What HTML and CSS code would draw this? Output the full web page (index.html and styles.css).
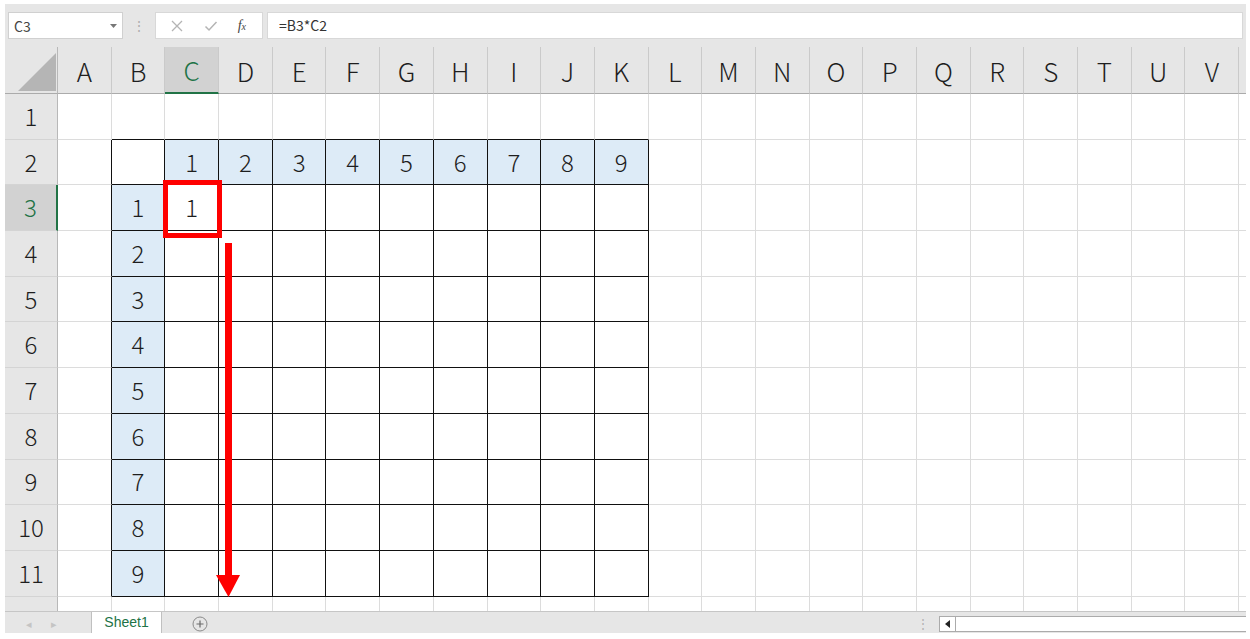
FILE: index.html
```html
<!DOCTYPE html>
<html>
<head>
  <title>Book1 - Excel</title>
  <link rel="stylesheet" href="styles.css">
</head>
<body>
  <div class="app">
    <div class="formula-bar">
      <div class="name-box">
        <span>C3</span>
        <svg class="drop" width="7" height="4" viewBox="0 0 7 4"><path d="M0 0h7L3.5 4z" fill="#777"/></svg>
      </div>
      <div class="grip">⋮</div>
      <div class="fx-buttons">
        <svg width="14" height="14" viewBox="0 0 14 14"><path d="M2 2l10 10M12 2L2 12" stroke="#b4b4b4" stroke-width="1.3"/></svg>
        <svg width="14" height="14" viewBox="0 0 14 14"><path d="M1.5 7.5l3.5 3.5 7.5-8" fill="none" stroke="#b4b4b4" stroke-width="1.5"/></svg>
        <span class="fx">f<small>x</small></span>
      </div>
      <div class="formula">=B3*C2</div>
    </div>

    <div class="sheet">
      <div class="grid" id="grid"></div>
      <div class="pick"></div>
      <svg class="arrow" width="24" height="354" viewBox="0 0 24 354">
        <rect x="9" y="0" width="7" height="334" fill="#ff0000"/>
        <polygon points="0,332 24,332 12.5,354" fill="#ff0000"/>
      </svg>
    </div>

    <div class="tab-bar">
      <div class="tab-nav">
        <span>◂</span><span>▸</span>
      </div>
      <div class="tab">Sheet1</div>
      <div class="add-sheet">
        <svg width="16" height="16" viewBox="0 0 16 16"><circle cx="8" cy="8" r="7" fill="none" stroke="#8a8a8a"/><path d="M8 4.5v7M4.5 8h7" stroke="#6a6a6a" stroke-width="1.2"/></svg>
      </div>
      <div class="tab-space"></div>
      <div class="grip small">⋮</div>
      <div class="hscroll">
        <div class="scroll-btn">
          <svg width="5" height="8" viewBox="0 0 5 8"><path d="M5 0v8L0 4z" fill="#222"/></svg>
        </div>
      </div>
    </div>
  </div>

  <script>
    const cols = 'ABCDEFGHIJKLMNOPQRSTUV'.split('');
    const grid = document.getElementById('grid');

    function cell(cls, text) {
      const d = document.createElement('div');
      d.className = cls;
      if (text !== '') d.textContent = text;
      grid.appendChild(d);
    }

    cell('corner', '');
    cols.forEach(c => cell('col-head' + (c === 'C' ? ' selected' : ''), c));
    cell('col-head', '');

    for (let r = 1; r <= 12; r++) {
      cell('row-head' + (r === 3 ? ' selected' : ''), r);
      cols.concat(['']).forEach((c, i) => {
        let cls = 'cell';
        let text = '';
        // black box around B2:K11
        if (r >= 2 && r <= 11 && i <= 10) cls += ' edge-r';
        if (r <= 11 && i >= 1 && i <= 10) cls += ' edge-b';
        if (r === 2 && i >= 2 && i <= 10) { cls += ' head'; text = i - 1; }
        if (i === 1 && r >= 3 && r <= 11) { cls += ' head'; text = r - 2; }
        if (r === 3 && i === 2) text = 1;
        cell(cls, text);
      });
    }
  </script>
</body>
</html>
```

FILE: styles.css
```css
body {
  margin: 0;
  background: #fff;
  font-family: "Noto Sans CJK JP", "Noto Sans", sans-serif;
}
.app {
  margin: 4px 4px 0 5px;
  width: 1241px;
  background: #e6e6e6;
}

/* formula bar */
.formula-bar {
  height: 43px;
  display: flex;
  align-items: flex-start;
  padding: 8px 3px 0 3px;
  box-sizing: border-box;
}
.name-box {
  width: 115px;
  height: 27px;
  box-sizing: border-box;
  background: #fff;
  border: 1px solid #d0d0d0;
  display: flex;
  align-items: center;
  justify-content: space-between;
  padding: 0 5px 0 5px;
  font-size: 14px;
  color: #444;
}
.drop {
  margin-top: 1px;
}
.grip {
  width: 32px;
  text-align: center;
  color: #b0b0b0;
  font-size: 14px;
  line-height: 27px;
}
.fx-buttons {
  width: 108px;
  height: 27px;
  box-sizing: border-box;
  background: #fff;
  border: 1px solid #d8d8d8;
  display: flex;
  align-items: center;
  justify-content: space-around;
  padding: 0 6px 0 4px;
}
.fx {
  font-family: "Liberation Serif", serif;
  font-style: italic;
  font-size: 14px;
  color: #444;
}
.fx small {
  font-size: 10px;
}
.formula {
  flex: 1;
  margin-left: 4px;
  height: 27px;
  box-sizing: border-box;
  background: #fff;
  border: 1px solid #d8d8d8;
  padding-left: 11px;
  font-size: 14px;
  line-height: 25px;
  color: #333;
}

/* sheet grid */
.sheet {
  position: relative;
  height: 564px;
  overflow: hidden;
  background: #fff;
}
.grid {
  display: grid;
  grid-template-columns: 53px repeat(23, 53.7px);
  grid-template-rows: 47px repeat(12, 45.7px);
}
.grid > div {
  box-sizing: border-box;
  display: flex;
  align-items: center;
  justify-content: center;
  padding-bottom: 2px;
  font-size: 24px;
  font-weight: 300;
  color: #1e1e1e;
}
.corner {
  position: relative;
  background: #e6e6e6;
  border-right: 1px solid #b8b8b8;
  border-bottom: 1px solid #ababab;
}
.corner::after {
  content: "";
  position: absolute;
  left: 13px;
  top: 6px;
  width: 38px;
  height: 38px;
  background: #b5b5b5;
  clip-path: polygon(100% 0, 100% 100%, 0 100%);
}
.grid > .col-head {
  background: #e6e6e6;
  border-right: 1px solid #cacaca;
  border-bottom: 1px solid #ababab;
  font-size: 26px;
  padding-bottom: 0;
}
.row-head {
  background: #e6e6e6;
  border-right: 1px solid #b8b8b8;
  border-bottom: 1px solid #d4d4d4;
}
.grid > .col-head.selected {
  background: #d2d2d2;
  color: #217346;
  border-bottom: 2px solid #217346;
}
.grid > .row-head.selected {
  background: #d2d2d2;
  color: #217346;
  border-right: 2px solid #217346;
}
.cell {
  border-right: 1px solid #dcdcdc;
  border-bottom: 1px solid #dcdcdc;
}
.cell.edge-r {
  border-right-color: #111;
}
.cell.edge-b {
  border-bottom-color: #111;
}
.cell.head {
  background: #ddebf7;
}

/* overlays */
.pick {
  position: absolute;
  left: 158px;
  top: 133px;
  width: 59px;
  height: 58px;
  box-sizing: border-box;
  border: 5px solid #ff0000;
}
.arrow {
  position: absolute;
  left: 211px;
  top: 196px;
}

/* sheet tabs */
.tab-bar {
  height: 21px;
  border-top: 1px solid #c6c6c6;
  display: flex;
  align-items: stretch;
}
.tab-nav {
  width: 87px;
  display: flex;
  gap: 19px;
  padding-left: 21px;
  box-sizing: border-box;
  align-items: center;
  color: #c4c4c4;
  font-size: 11px;
  border-right: 1px solid #c0c0c0;
}
.tab {
  width: 69px;
  background: #fff;
  color: #217346;
  font-family: "Liberation Sans", sans-serif;
  font-size: 14px;
  line-height: 20px;
  text-align: center;
  border-right: 1px solid #c0c0c0;
}
.add-sheet {
  width: 76px;
  display: flex;
  align-items: center;
  justify-content: center;
  padding-top: 3px;
}
.tab-space {
  flex: 1;
}
.grip.small {
  width: 32px;
  font-size: 12px;
  line-height: 22px;
}
.hscroll {
  width: 307px;
  margin-top: 4px;
  height: 16px;
  box-sizing: border-box;
  background: #fff;
  border: 1px solid #ababab;
  border-right: none;
}
.scroll-btn {
  width: 15px;
  height: 14px;
  border-right: 1px solid #ababab;
  display: flex;
  align-items: center;
  justify-content: center;
}
```
